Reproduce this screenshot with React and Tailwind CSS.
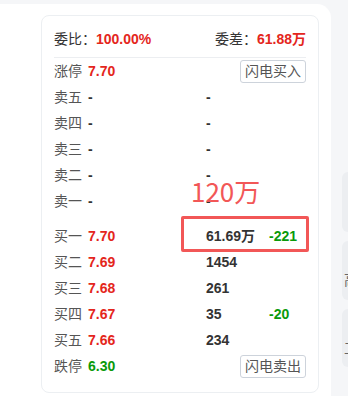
const FONT = { fontFamily: '"Liberation Sans", "Noto Sans CJK SC", sans-serif' };

const RED = 'text-[#e4261c]';
const GREEN = 'text-[#0a9a0a]';

const sells = ['卖五', '卖四', '卖三', '卖二', '卖一'];

const buys = [
  { label: '买一', price: '7.70', vol: '61.69万', diff: '-221' },
  { label: '买二', price: '7.69', vol: '1454', diff: '' },
  { label: '买三', price: '7.68', vol: '261', diff: '' },
  { label: '买四', price: '7.67', vol: '35', diff: '-20' },
  { label: '买五', price: '7.66', vol: '234', diff: '' },
];

function Row({ label, price, priceColor = RED, vol, diff, extra }) {
  return (
    <div className="grid h-[26px] grid-cols-[34px_118px_63px_1fr] items-center whitespace-nowrap text-[14px] leading-none">
      <span className="text-[#555]">{label}</span>
      <span className={`font-bold ${priceColor}`}>{price}</span>
      {extra ? (
        <span className="col-span-2 flex justify-end">{extra}</span>
      ) : (
        <>
          <span className="font-bold text-[#333]">{vol}</span>
          <span className={`font-bold ${GREEN}`}>{diff}</span>
        </>
      )}
    </div>
  );
}

function FlashButton({ children }) {
  return (
    <button className="h-[23px] whitespace-nowrap rounded-[3px] border border-[#cdd3db] bg-white px-[4px] text-[14px] leading-none text-[#555]">
      {children}
    </button>
  );
}

function OrderBook() {
  return (
    <div className="relative w-[278px] rounded-[8px] border border-[#eceff2] bg-white px-[12px] pt-[11px] pb-[13px]">
      <div className="flex h-[24px] items-center justify-between text-[14px] leading-none">
        <div>
          <span className="text-[#333]">委比：</span>
          <span className={`font-bold ${RED}`}>100.00%</span>
        </div>
        <div>
          <span className="text-[#333]">委差：</span>
          <span className={`font-bold ${RED}`}>61.88万</span>
        </div>
      </div>
      <div className="mt-[6px] border-t border-[#eceef1]" />

      <Row label="涨停" price="7.70" extra={<FlashButton>闪电买入</FlashButton>} />
      {sells.map((s) => (
        <Row key={s} label={s} price="-" priceColor="text-[#333]" vol="-" />
      ))}
      <div className="h-[9px]" />
      {buys.map((b) => (
        <Row key={b.label} {...b} />
      ))}
      <Row label="跌停" price="6.30" priceColor={GREEN} extra={<FlashButton>闪电卖出</FlashButton>} />

      {/* annotation overlay */}
      <div
        className="absolute left-[149px] top-[162px] text-[26px] font-normal leading-none text-[#f25757]"
        style={{ fontFamily: '"Noto Sans CJK SC", sans-serif' }}
      >
        120万
      </div>
      <div className="absolute left-[139px] top-[200px] h-[36px] w-[128px] rounded-[2px] border-[3px] border-[#f25757]" />
    </div>
  );
}

export default function App() {
  return (
    <div className="flex h-[396px] w-[348px] overflow-hidden bg-[#f5f6f8]" style={FONT}>
      <div className="mt-[4px] w-[331px] shrink-0 rounded-tr-[14px] bg-white pt-[11px] pl-[41px]">
        <OrderBook />
      </div>
      <div className="flex flex-1 flex-col gap-[9px] pt-[172px] pl-[11px]">
        <div className="h-[60px] rounded-l-[6px] bg-[#eceef1]" />
        <div className="h-[59px] overflow-hidden rounded-l-[6px] bg-[#eceef1] pt-[32px] pl-[2px] text-[14px] leading-none text-[#666]">
          高
        </div>
        <div className="h-[58px] overflow-hidden rounded-l-[6px] bg-[#eceef1] pt-[32px] pl-[2px] text-[14px] leading-none text-[#666]">
          工
        </div>
      </div>
    </div>
  );
}
